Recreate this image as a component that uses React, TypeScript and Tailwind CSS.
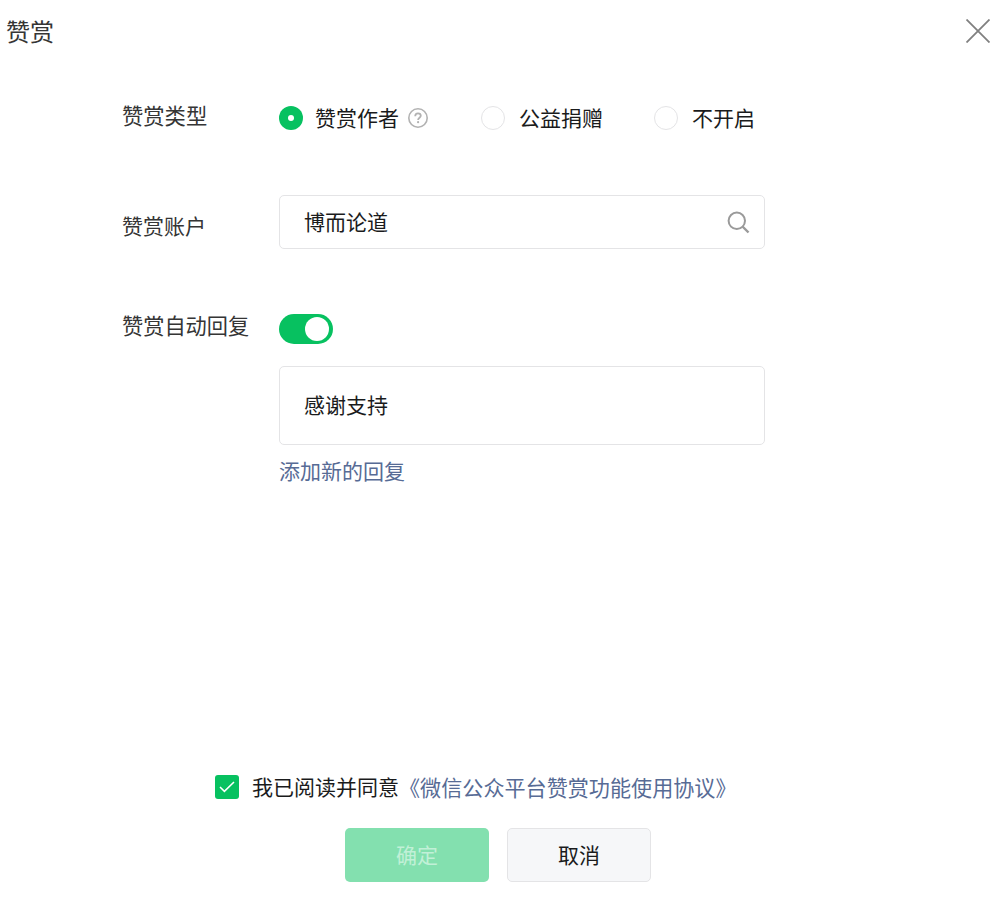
import { useState } from "react";

const rewardTypes = [
    { id: "author", label: "赞赏作者", hint: true, gap: "w-[202px]" },
    { id: "charity", label: "公益捐赠", hint: false, gap: "w-[173px]" },
    { id: "off", label: "不开启", hint: false, gap: "" },
];

export default function RewardDialog() {
    const [type, setType] = useState("author");
    const [account, setAccount] = useState("博而论道");
    const [autoReply, setAutoReply] = useState(true);
    const [agreed, setAgreed] = useState(true);

    const renderRadio = (checked: boolean) => (
        <span
            className={`flex size-6 shrink-0 items-center justify-center rounded-full ${
                checked ? "bg-[#07c160]" : "border border-[#e4e4e6] bg-white"
            }`}
        >
            {checked && <span className="size-1.5 rounded-full bg-white" />}
        </span>
    );

    return (
        <div className="flex h-[910px] w-[1002px] flex-col bg-white font-['Noto_Sans_CJK_SC',sans-serif] text-[21px] leading-[30px] text-[#1a1b1c]">
            <header className="flex h-[62px] items-center justify-between pr-3 pl-1.5">
                <h1 className="text-2xl text-[#353535]">赞赏</h1>
                <button aria-label="关闭">
                    <svg width="24" height="24" viewBox="0 0 24 24" fill="none" stroke="#808080" strokeWidth="1.8">
                        <path d="M0.5 0.5l23 23M23.5 0.5l-23 23" />
                    </svg>
                </button>
            </header>

            <main className="flex-1 pl-[122px]">
                <div className="flex pt-[37px]">
                    <div className="w-[157px] pt-px text-[21.3px] text-[#353535]">赞赏类型</div>
                    <div className="flex pt-[3px]">
                        {rewardTypes.map((item) => (
                            <div
                                key={item.id}
                                className={`flex items-center ${item.gap}`}
                                onClick={() => setType(item.id)}
                            >
                                {renderRadio(type === item.id)}
                                <span className={`pb-0.5 ${item.hint ? "ml-3" : "ml-3.5"}`}>{item.label}</span>
                                {item.hint && (
                                    <svg className="ml-[9px]" width="20" height="20" viewBox="0 0 20 20" fill="none" stroke="#b2b2b2" strokeWidth="1.6">
                                        <circle cx="10" cy="10" r="9.2" />
                                        <path d="M7.2 8.2c0-1.9 1.1-2.9 2.8-2.9s2.8 1 2.8 2.5c0 1.9-2.7 2.1-2.7 4.2" strokeWidth="1.8" />
                                        <circle cx="10.1" cy="14.2" r="1.1" fill="#b2b2b2" stroke="none" />
                                    </svg>
                                )}
                            </div>
                        ))}
                    </div>
                </div>

                <div className="mt-[61px] flex">
                    <div className="w-[157px] pt-[15px] text-[#353535]">赞赏账户</div>
                    <div className="flex h-[54px] w-[486px] items-center justify-between rounded-[5px] border border-[#e4e4e6] pr-3.5 pl-6">
                        <input
                            className="w-96 pb-0.5 outline-none"
                            value={account}
                            onChange={(e) => setAccount(e.target.value)}
                        />
                        <svg width="23" height="23" viewBox="0 0 23 23" fill="none" stroke="#9a9a9a" strokeWidth="2">
                            <circle cx="9.8" cy="9.8" r="8.2" />
                            <path d="M15.5 15.5l6 6" strokeWidth="2.4" />
                        </svg>
                    </div>
                </div>

                <div className="mt-[60px] flex">
                    <div className="w-[157px] pt-px text-[21.2px] text-[#353535]">赞赏自动回复</div>
                    <div>
                        <button
                            role="switch"
                            aria-checked={autoReply}
                            aria-label="赞赏自动回复"
                            className={`mt-[5px] flex h-[30px] w-[54px] items-center rounded-full px-1 ${
                                autoReply ? "justify-end bg-[#07c160]" : "justify-start bg-[#e4e4e6]"
                            }`}
                            onClick={() => setAutoReply(!autoReply)}
                        >
                            <span className="size-6 rounded-full bg-white" />
                        </button>
                        <div className="mt-[22px] flex h-[79px] w-[486px] items-center rounded-[5px] border border-[#e4e4e6] px-6 pb-1">
                            感谢支持
                        </div>
                        <a className="mt-2.5 block text-[#576b95]">添加新的回复</a>
                    </div>
                </div>
            </main>

            <footer className="h-[138px]">
                <div className="flex h-[30px] items-center pl-[215px]">
                    <button
                        role="checkbox"
                        aria-checked={agreed}
                        aria-label="同意协议"
                        className={`mr-[13px] flex size-6 items-center justify-center rounded-[3px] ${
                            agreed ? "bg-[#07c160]" : "border border-[#e4e4e6]"
                        }`}
                        onClick={() => setAgreed(!agreed)}
                    >
                        {agreed && (
                            <svg width="16" height="12" viewBox="0 0 16 12" fill="none" stroke="#fff" strokeWidth="1.5">
                                <path d="M1 6l4.4 4.4L15 1" />
                            </svg>
                        )}
                    </button>
                    <span className="pb-0.5">我已阅读并同意</span>
                    <a className="text-[21.1px] text-[#576b95]">《微信公众平台赞赏功能使用协议》</a>
                </div>
                <div className="mt-[26px] flex gap-[18px] pl-[345px]">
                    <button className="h-[54px] w-36 rounded-[5px] bg-[#83e0af] pb-0.5 text-[#c1f0d7]">确定</button>
                    <button className="h-[54px] w-36 rounded-[5px] border border-[#e4e4e6] bg-[#f6f7f9] pb-0.5">取消</button>
                </div>
            </footer>
        </div>
    );
}
